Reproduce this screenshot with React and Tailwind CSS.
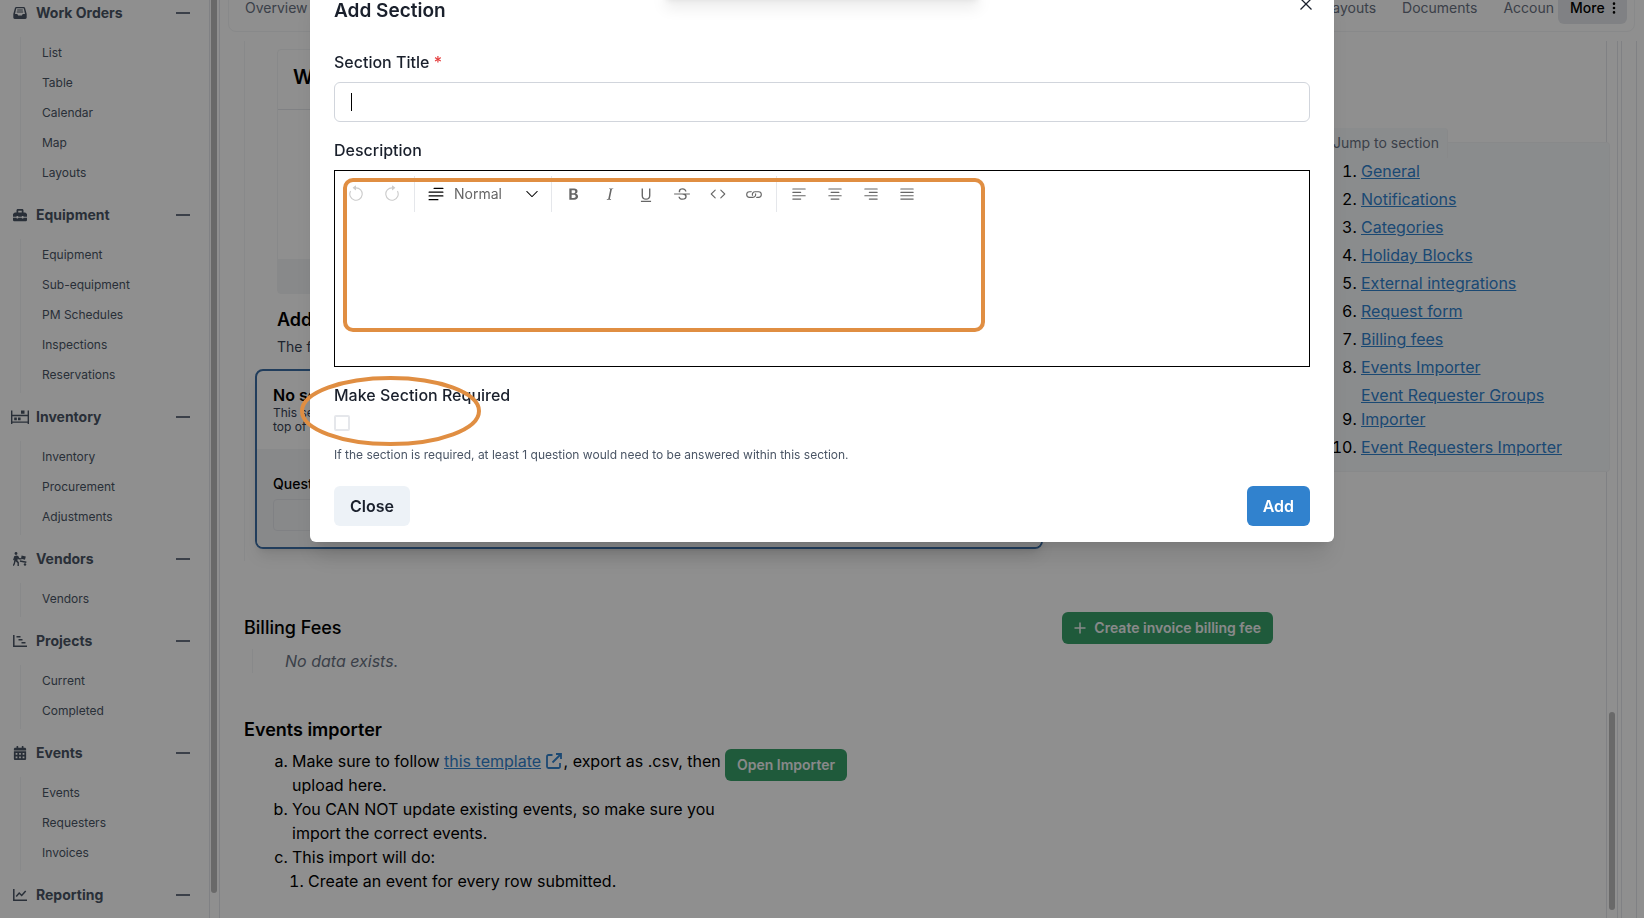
import React from "react";
import { FaToolbox, FaCalendarAlt } from "react-icons/fa";
import {
  BsArrowCounterclockwise,
  BsArrowClockwise,
  BsTextParagraph,
  BsTypeBold,
  BsTypeItalic,
  BsTypeUnderline,
  BsTypeStrikethrough,
  BsCode,
  BsLink,
  BsTextLeft,
  BsTextCenter,
  BsTextRight,
  BsJustify,
  BsChevronDown,
  BsThreeDotsVertical,
} from "react-icons/bs";

function TrayIcon() {
  return (
    <svg viewBox="0 0 14 14" className="size-3.5" fill="currentColor" fillRule="evenodd">
      <path d="M3 1h8l1 .8L13.7 8v3.6A1.4 1.4 0 0 1 12.3 13H1.7A1.4 1.4 0 0 1 .3 11.6V8L2 1.8zM3.3 2.3 2 8h2.3l.8 1.5h3.8l.8-1.5H12l-1.3-5.7zM4.2 3.6h5.6v1H4.2zM3.8 5.6h6.4v1H3.8z" />
    </svg>
  );
}

function ShelfIcon() {
  return (
    <svg viewBox="0 0 18 14" className="h-3.5 w-[18px]" fill="currentColor">
      <path d="M0 .5h1.4v4.3h15.2V.5H18V14h-1.4v-1.2H1.4V14H0zM1.4 6.2v5.2h15.2V6.2z" fillRule="evenodd" />
      <path d="M10 .5h3.5v3.2H10zM3.2 7.6h2.6v2.6H3.2zM7 7.6h2.6v2.6H7z" />
    </svg>
  );
}

function CarryIcon() {
  return (
    <svg viewBox="0 0 14 14" className="size-3.5" fill="currentColor">
      <circle cx="3" cy="1.5" r="1.4" />
      <path d="M1.2 4.2 3.5 3.4l1.7.6L6.3 6l2.2.2v1.3H5.6L4.9 6.6l-.5 2 1.5 1.7V14H4.5v-3L2.6 9.3 1.9 12l-1 2-1.2-.6L.8 11l.6-4-.3 1L0 8.3z" />
      <path d="m8.6 3.4 4.2 1.1-.8 3.3-4-1.1zM7 8.3l6.5 1.3-.3 1.3-6.4-1.2z" />
      <circle cx="12" cy="12.5" r="1.2" />
    </svg>
  );
}

function GanttIcon() {
  return (
    <svg viewBox="0 0 14 12" className="h-3 w-3.5" fill="none" stroke="currentColor" strokeWidth="1.5">
      <path d="M.8 0v11.2H14M3.5 1.8h4M5.5 4.8h4M8.5 7.8h4" />
    </svg>
  );
}

function LineChartIcon() {
  return (
    <svg viewBox="0 0 14 12" className="h-3 w-3.5" fill="none" stroke="currentColor" strokeWidth="1.5">
      <path d="M.8 0v11.2H14M3.2 7.5l3-3.5 2.5 2.5 4-4.5" />
    </svg>
  );
}

function ExternalIcon() {
  return (
    <svg viewBox="0 0 16 16" className="mr-0.5 mb-1 inline size-4" fill="none" stroke="currentColor" strokeWidth="1.8">
      <path d="M6.5 2H2.5A1.5 1.5 0 0 0 1 3.5v10A1.5 1.5 0 0 0 2.5 15h10a1.5 1.5 0 0 0 1.5-1.5V10M10 1h5v5M15 1 6.5 9.5" />
    </svg>
  );
}

const groups = [
  { name: "Work Orders", icon: <TrayIcon />, items: ["List", "Table", "Calendar", "Map", "Layouts"] },
  {
    name: "Equipment",
    icon: <FaToolbox className="size-3.5" />,
    items: ["Equipment", "Sub-equipment", "PM Schedules", "Inspections", "Reservations"],
  },
  { name: "Inventory", icon: <ShelfIcon />, items: ["Inventory", "Procurement", "Adjustments"] },
  { name: "Vendors", icon: <CarryIcon />, items: ["Vendors"] },
  { name: "Projects", icon: <GanttIcon />, items: ["Current", "Completed"] },
  { name: "Events", icon: <FaCalendarAlt className="size-3.5" />, items: ["Events", "Requesters", "Invoices"] },
  { name: "Reporting", icon: <LineChartIcon />, items: [] },
];

const sections = [
  "General",
  "Notifications",
  "Categories",
  "Holiday Blocks",
  "External integrations",
  "Request form",
  "Billing fees",
  "Events Importer",
  "Event Requester Groups Importer",
  "Event Requesters Importer",
];

function Sidebar() {
  return (
    <div className="flex shrink-0 border-r border-gray-200">
      <nav className="-mt-[11px] w-[209px] text-gray-600">
        {groups.map((g) => (
          <div key={g.name}>
            <button className="flex h-12 w-full items-center pr-[19px] pl-[11px] text-left">
              <span className="flex w-[18px] shrink-0 justify-center">{g.icon}</span>
              <span className="ml-[7px] flex-1 text-sm font-bold">{g.name}</span>
              <span className="h-0.5 w-3.5 bg-gray-500" />
            </button>
            {g.items.length > 0 && (
              <ul className="ml-5 border-l border-gray-100 pt-px pb-[3px]">
                {g.items.map((i) => (
                  <li key={i} className="flex h-[30px] items-center pl-[21px] text-xs">
                    <a href="#">{i}</a>
                  </li>
                ))}
              </ul>
            )}
          </div>
        ))}
      </nav>
      <div className="w-2.5 border-l border-gray-200 pl-px">
        <div className="h-[893px] w-1.5 rounded-b-full bg-[#bcbcbc]" />
      </div>
    </div>
  );
}

function TabBar() {
  return (
    <nav className="-mt-4 mr-[9px] ml-2 flex shrink-0 items-center rounded-lg border border-gray-100 p-[7px] text-sm text-gray-500">
      <a href="#" className="ml-[9px] flex-1">Overview</a>
      <div className="flex gap-[26px]">
        <a href="#">Layouts</a>
        <a href="#">Documents</a>
        <a href="#">Accoun</a>
      </div>
      <button className="ml-1 flex h-8 w-[69px] items-center rounded-md bg-gray-200 pl-3 font-medium text-black">
        More
        <BsThreeDotsVertical className="ml-0.5 size-3.5" />
      </button>
    </nav>
  );
}

function RequestForm() {
  return (
    <section className="border-l border-gray-100 pb-3">
      <div className="pt-2 pl-8">
        <div className="flex h-[245px] w-[766px] flex-col rounded border border-gray-100">
          <h3 className="h-[60px] border-b border-gray-200 pt-[13px] pl-[15px] text-xl font-semibold">
            Work form
          </h3>
          <div className="flex-1" />
          <div className="h-[34px] bg-gray-100" />
        </div>
        <h3 className="mt-3 text-lg font-semibold">Additional sections</h3>
        <p className="mt-[3px] text-sm text-gray-700">The following sections are shown on the form.</p>
      </div>
      <div className="mt-3 ml-2.5 w-[788px] overflow-hidden rounded-lg border-2 border-[#3b6ea5] shadow-lg">
        <div className="border-b border-gray-100 px-4 pt-3.5 pb-[15px]">
          <h4 className="leading-[21px] font-semibold">No section</h4>
          <p className="text-xs leading-[14px] text-gray-700">
            This section will be at the
            <br />
            top of the form.
          </p>
        </div>
        <div className="bg-gray-100 px-4 pt-6 pb-4">
          <label htmlFor="questions" className="block text-sm font-medium">Questions</label>
          <input id="questions" className="mt-[5px] block h-8 w-full rounded border border-gray-200" />
        </div>
      </div>
    </section>
  );
}

const greenButton = "flex h-8 shrink-0 items-center rounded-md bg-[#38a169] px-3 text-sm font-semibold text-gray-100";

function Content() {
  return (
    <div className="min-w-0 flex-1">
      <RequestForm />
      <div className="mt-[51px] flex h-8 items-center justify-between">
        <h2 className="text-lg font-medium">Billing Fees</h2>
        <button className={greenButton}>
          <svg viewBox="0 0 12 12" className="mr-2 size-3" stroke="currentColor" strokeWidth="1.5">
            <path d="M6 .5v11M.5 6h11" />
          </svg>
          Create invoice billing fee
        </button>
      </div>
      <p className="mt-[5px] ml-2 border-l border-gray-100 pl-8 text-gray-500 italic">No data exists.</p>
      <h2 className="mt-[43px] text-lg font-semibold">Events importer</h2>
      <div className="mt-[5px] flex items-start">
        <ol className="w-[481px] list-[lower-alpha] pl-12">
          <li>
            Make sure to follow{" "}
            <a href="#" className="text-[#3182ce]">
              <span className="underline">this template</span> <ExternalIcon />
            </a>
            , export as .csv, then upload here.
          </li>
          <li>You CAN NOT update existing events, so make sure you import the correct events.</li>
          <li>
            This import will do:
            <ol className="list-decimal pl-4">
              <li>Create an event for every row submitted.</li>
            </ol>
          </li>
        </ol>
        <button className={greenButton}>Open Importer</button>
      </div>
    </div>
  );
}

function JumpTo() {
  return (
    <aside className="relative mt-[101px] -mr-1 ml-12 w-[289px] shrink-0 self-start rounded border-t border-r border-b border-gray-100 bg-[#f7fafc] pb-3">
      <h2 className="-mt-[15px] h-[30px] w-[127px] rounded-t border-r border-gray-100 bg-[#f7fafc] px-3 text-sm leading-[30px] whitespace-nowrap text-gray-500">
        Jump to section
      </h2>
      <ol className="mt-px list-decimal space-y-1 pl-10">
        {sections.map((s) => (
          <li key={s}>
            <a href="#" className="inline-block max-w-[220px] align-baseline text-[#3182ce] underline">
              {s}
            </a>
          </li>
        ))}
      </ol>
    </aside>
  );
}

function ToolButton({ label, children, disabled }) {
  return (
    <button
      type="button"
      aria-label={label}
      disabled={disabled}
      className="flex h-9 w-9 items-center justify-center text-[#666] disabled:text-[#ccc]"
    >
      {children}
    </button>
  );
}

function Divider() {
  return <div className="mx-1 h-9 w-px bg-gray-200" />;
}

function Editor() {
  return (
    <div className="relative h-[197px] border border-black">
      <div className="flex items-center pt-[5px] pl-[3px]">
        <ToolButton label="Undo" disabled><BsArrowCounterclockwise size={18} /></ToolButton>
        <ToolButton label="Redo" disabled><BsArrowClockwise size={18} /></ToolButton>
        <Divider />
        <div className="flex w-[128px] items-center text-black">
          <BsTextParagraph size={20} className="ml-[7px] shrink-0" />
          <select
            aria-label="Block type"
            className="ml-2 w-[71px] appearance-none bg-transparent text-sm text-[#666]"
          >
            <option>Normal</option>
          </select>
          <BsChevronDown size={14} className="shrink-0" />
        </div>
        <Divider />
        <ToolButton label="Bold"><BsTypeBold size={18} /></ToolButton>
        <ToolButton label="Italic"><BsTypeItalic size={18} /></ToolButton>
        <ToolButton label="Underline"><BsTypeUnderline size={18} /></ToolButton>
        <ToolButton label="Strikethrough"><BsTypeStrikethrough size={18} /></ToolButton>
        <ToolButton label="Code"><BsCode size={18} /></ToolButton>
        <ToolButton label="Link"><BsLink size={18} /></ToolButton>
        <Divider />
        <ToolButton label="Align left"><BsTextLeft size={18} /></ToolButton>
        <ToolButton label="Align center"><BsTextCenter size={18} /></ToolButton>
        <ToolButton label="Align right"><BsTextRight size={18} /></ToolButton>
        <ToolButton label="Justify"><BsJustify size={18} /></ToolButton>
      </div>
      <div className="pointer-events-none absolute top-[7px] left-2 h-[154px] w-[642px] rounded-[10px] border-4 border-[#e08e42]" />
    </div>
  );
}

function Modal() {
  return (
    <div className="fixed inset-0 flex items-start justify-center overflow-hidden bg-black/44">
      <form
        role="dialog"
        aria-labelledby="dialog-title"
        className="relative -mt-5 w-full max-w-5xl rounded-md bg-white px-6 pt-4 pb-4 text-[#1a202c] shadow-xl"
      >
        <div className="flex items-start justify-between">
          <h1 id="dialog-title" className="text-[19px] leading-[30px] font-semibold">Add Section</h1>
          <button type="button" aria-label="Close dialog" className="-mr-1 p-0.5">
            <svg viewBox="0 0 12 12" className="size-3" fill="none" stroke="currentColor" strokeWidth="1.3">
              <path d="M.5.5l11 11M11.5.5l-11 11" />
            </svg>
          </button>
        </div>
        <label htmlFor="title" className="mt-6 block font-medium">
          Section Title <span className="text-[#e53e3e]">*</span>
        </label>
        <div className="mt-2 flex h-10 items-center rounded-md border border-gray-300 pl-4">
          <span className="h-[18px] w-px bg-black" />
          <input id="title" className="h-full flex-1 outline-none" />
        </div>
        <h2 className="mt-4 mb-2 font-medium">Description</h2>
        <Editor />
        <div className="relative mt-4">
          <label htmlFor="required" className="block font-medium">Make Section Required</label>
          <input
            id="required"
            type="checkbox"
            className="mt-2 block size-4 appearance-none rounded-xs border-2 border-gray-200"
          />
          <svg
            className="pointer-events-none absolute -top-[7px] -left-[34px] h-[70px] w-[181px]"
            viewBox="0 0 181 70"
            fill="none"
            stroke="#e08e42"
            strokeWidth="4"
          >
            <ellipse cx="90.5" cy="35" rx="88.5" ry="33" />
          </svg>
        </div>
        <p className="mt-4 text-xs text-gray-600">
          If the section is required, at least 1 question would need to be answered within this section.
        </p>
        <div className="mt-[23px] flex justify-between font-semibold">
          <button type="button" className="h-10 rounded-md bg-[#edf2f7] px-4">Close</button>
          <button type="button" className="h-10 rounded-md bg-[#3182ce] px-4 text-white">Add</button>
        </div>
      </form>
      <div className="absolute -top-4 h-4 w-80 rounded-md bg-white shadow-lg" />
    </div>
  );
}

export default function App() {
  return (
    <div className="flex h-screen overflow-hidden bg-white font-['Inter',sans-serif] text-base text-black">
      <Sidebar />
      <main className="flex min-w-0 flex-1 flex-col">
        <TabBar />
        <div className="mt-[9px] mr-[7px] flex flex-1 border-r border-gray-200">
          <div className="flex min-w-0 flex-1 border-r border-gray-200 pl-6">
            <Content />
            <JumpTo />
          </div>
          <div className="flex w-[11px] flex-col items-center justify-end border-r border-gray-200 pb-2">
            <div className="h-[198px] w-1.5 rounded-full bg-[#bcbcbc]" />
          </div>
          <div className="w-[4px] border-r border-gray-200" />
          <div className="w-[14px]" />
        </div>
      </main>
      <Modal />
    </div>
  );
}
